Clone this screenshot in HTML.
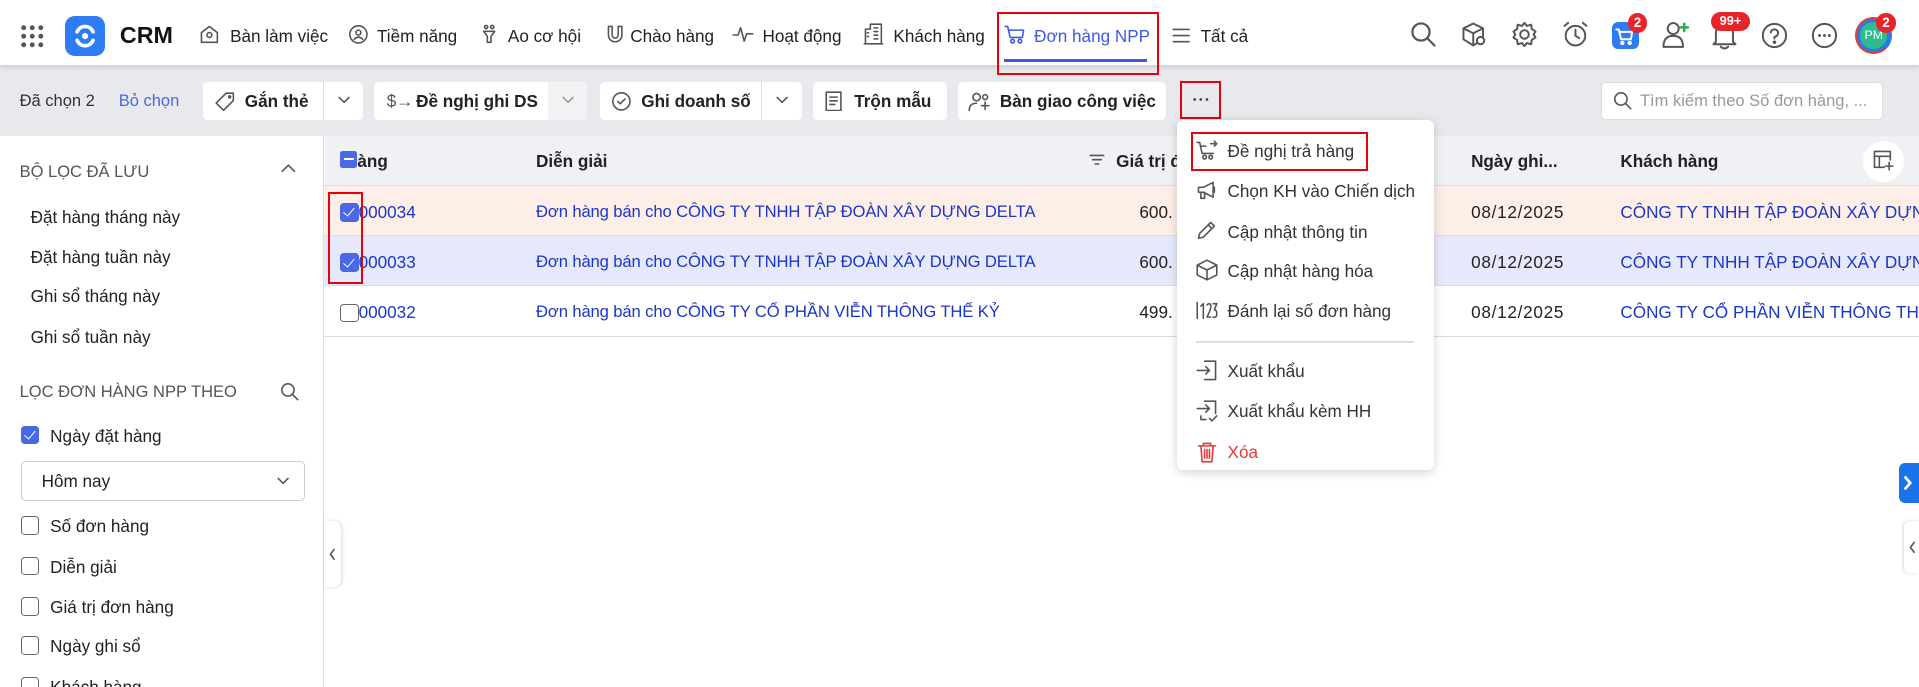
<!DOCTYPE html>
<html><head><meta charset="utf-8"><style>
*{box-sizing:border-box;margin:0;padding:0}
html,body{width:1919px;height:687px;overflow:hidden;background:#fff}
#w{zoom:1.22385;width:1568px;height:561px;position:relative;font-family:"Liberation Sans",sans-serif;color:#222;font-size:14px}
.a{position:absolute;white-space:nowrap}
svg{position:absolute;fill:none;stroke:#555;stroke-width:1.3;stroke-linecap:round;stroke-linejoin:round}
.btn{position:absolute;top:67px;height:31px;background:#fff;border-radius:4px}
.btn span{position:absolute;top:7px;font-size:14px;font-weight:bold;color:#222}
.red{position:absolute;border:2px solid #e8000a}
.cb{position:absolute;width:15px;height:15px;border-radius:3px;border:1.3px solid #666;background:#fff}
.cb.on{background:#4a67e6;border-color:#4a67e6}
.cb.on:after{content:"";position:absolute;left:4px;top:1px;width:4px;height:8px;border:solid #fff;border-width:0 1.5px 1.5px 0;transform:rotate(40deg)}
.blue{color:#1b37c8}
.d{font-size:13.6px;letter-spacing:-0.1px}
.mi{position:absolute;left:1003px;font-size:14px;color:#333}
</style></head><body><div id="w">
<div class="a" style="left:0;top:0;width:1568px;height:53px;background:#fff;box-shadow:0 2px 4px rgba(0,0,0,.12);z-index:2"></div>
<div style="position:absolute;z-index:3;left:0;top:0;width:1568px;height:53px">
<svg style="left:16px;top:20px" width="20" height="20" viewBox="0 0 20 20"><g fill="#555" stroke="none"><circle cx="3" cy="3" r="2"/><circle cx="10" cy="3" r="2"/><circle cx="17" cy="3" r="2"/><circle cx="3" cy="10" r="2"/><circle cx="10" cy="10" r="2"/><circle cx="17" cy="10" r="2"/><circle cx="3" cy="17" r="2"/><circle cx="10" cy="17" r="2"/><circle cx="17" cy="17" r="2"/></g></svg>
<div class="a" style="left:53px;top:13px;width:33px;height:33px;border-radius:8px;background:#2d7cf6"></div>
<svg style="left:58px;top:18px" width="23" height="23" viewBox="0 0 23 23"><path d="M5 8A7 7 0 0 1 18 8M18 15A7 7 0 0 1 5 15" stroke="#fff" stroke-width="3"/><circle cx="11.5" cy="11.5" r="2.5" fill="#fff" stroke="none"/></svg>
<div class="a" style="left:98px;top:18px;font-size:19px;font-weight:bold;color:#111">CRM</div>
<svg style="left:163px;top:20px" width="17" height="17" viewBox="0 0 17 17"><path d="M2 7L8.5 2 15 7V15H2Z"/><circle cx="8.5" cy="9" r="2"/></svg>
<div class="a" style="left:188px;top:21px">Bàn làm việc</div>
<svg style="left:284px;top:20px" width="17" height="17" viewBox="0 0 17 17"><circle cx="8.5" cy="8.5" r="7"/><circle cx="8.5" cy="7" r="2"/><path d="M5 12.5Q8.5 9 12 12.5"/></svg>
<div class="a" style="left:308px;top:21px">Tiềm năng</div>
<svg style="left:392px;top:20px" width="15" height="17" viewBox="0 0 15 17"><path d="M3 6H12L9 10V15H6V10Z"/><circle cx="5" cy="2.5" r="1.3"/><circle cx="10" cy="2.5" r="1.3"/></svg>
<div class="a" style="left:415px;top:21px">Ao cơ hội</div>
<svg style="left:495px;top:20px" width="15" height="17" viewBox="0 0 15 17"><path d="M2 2V9A5.5 5.5 0 0 0 13 9V2H10V9A2.5 2.5 0 0 1 5 9V2Z"/></svg>
<div class="a" style="left:515px;top:21px">Chào hàng</div>
<svg style="left:598px;top:20px" width="18" height="17" viewBox="0 0 18 17"><path d="M1 9H5L7 3 10 14 12 8H17"/></svg>
<div class="a" style="left:623px;top:21px">Hoạt động</div>
<svg style="left:705px;top:19px" width="17" height="18" viewBox="0 0 17 18"><path d="M2 17V5H6V1H15V17ZM1 17H16M9 4h3M9 7h3M9 10h3M9 13h3M3.5 8h1M3.5 11h1"/></svg>
<div class="a" style="left:730px;top:21px">Khách hàng</div>
<svg style="left:820px;top:20px" width="18" height="17" viewBox="0 0 18 17"><path d="M1 2H3L5 11H15L16 5H4" stroke="#3c5be0"/><circle cx="7" cy="14" r="1.5" stroke="#3c5be0"/><circle cx="13" cy="14" r="1.5" stroke="#3c5be0"/></svg>
<div class="a" style="left:845px;top:21px;color:#3c5be0">Đơn hàng NPP</div>
<div class="a" style="left:820px;top:48px;width:117px;height:3px;background:#3c5be0"></div>
<div class="red" style="left:815px;top:10px;width:132px;height:51px"></div>
<svg style="left:958px;top:22px" width="15" height="14" viewBox="0 0 15 14"><path d="M1 2H14M1 7H14M1 12H14"/></svg>
<div class="a" style="left:981px;top:21px">Tất cả</div>
<svg style="left:1152px;top:17px;stroke-width:1.8" width="22" height="22" viewBox="0 0 22 22"><circle cx="9" cy="9" r="7"/><path d="M14 14L20 20"/></svg>
<svg style="left:1194px;top:17px;stroke-width:1.6" width="22" height="22" viewBox="0 0 22 22"><path d="M10 2L2 6V15L10 20 18 15V6ZM2 6L10 10 18 6M10 10V20"/><circle cx="16" cy="16" r="3" fill="#fff"/></svg>
<svg style="left:1235px;top:17px;stroke-width:1.6" width="22" height="22" viewBox="0 0 22 22"><circle cx="11" cy="11" r="3.5"/><path d="M11 1.5L13 4 16.5 3 17 6.5 20 8.5 18.5 11 20 13.5 17 15.5 16.5 19 13 18 11 20.5 9 18 5.5 19 5 15.5 2 13.5 3.5 11 2 8.5 5 6.5 5.5 3 9 4Z"/></svg>
<svg style="left:1276px;top:17px;stroke-width:1.6" width="22" height="22" viewBox="0 0 22 22"><circle cx="11" cy="12" r="8"/><path d="M11 7V12L14 14M2 4L5 1.5M20 4L17 1.5"/></svg>
<div class="a" style="left:1317px;top:18px;width:22px;height:22px;border-radius:5px;background:#2d7cf6"></div>
<svg style="left:1320px;top:22px;stroke:#fff;stroke-width:1.6" width="16" height="15" viewBox="0 0 16 15"><path d="M1 2H3L5 10H13L14 4H4"/><circle cx="6" cy="13" r="1"/><circle cx="12" cy="13" r="1"/></svg>
<div class="a" style="left:1330px;top:11px;width:16px;height:16px;border-radius:8px;background:#e8232a;color:#fff;font-size:11px;font-weight:bold;text-align:center;line-height:16px">2</div>
<svg style="left:1357px;top:16px;stroke-width:1.6" width="24" height="24" viewBox="0 0 24 24"><circle cx="10" cy="7" r="4.5"/><path d="M2 22Q2 13 10 13Q18 13 18 22Z"/><path d="M19 3V9M16 6H22" stroke="#2cae4a" stroke-width="2"/></svg>
<svg style="left:1398px;top:17px;stroke-width:1.6" width="22" height="24" viewBox="0 0 22 24"><path d="M4 17V10A7 7 0 0 1 18 10V17L20 19H2ZM8 21Q11 24 14 21"/></svg>
<div class="a" style="left:1398px;top:10px;width:32px;height:15px;border-radius:8px;background:#e8232a;color:#fff;font-size:10.5px;font-weight:bold;text-align:center;line-height:15px">99+</div>
<svg style="left:1439px;top:18px;stroke-width:1.6" width="22" height="22" viewBox="0 0 22 22"><circle cx="11" cy="11" r="9.5"/><path d="M8 8.5A3 3 0 1 1 11 12V13.5"/><circle cx="11" cy="16.5" r=".6" fill="#555"/></svg>
<svg style="left:1480px;top:18px;stroke-width:1.6" width="22" height="22" viewBox="0 0 22 22"><circle cx="11" cy="11" r="9.5"/><g fill="#555" stroke="none"><circle cx="7" cy="11" r="1.2"/><circle cx="11" cy="11" r="1.2"/><circle cx="15" cy="11" r="1.2"/></g></svg>
<div class="a" style="left:1516px;top:14px;width:30px;height:30px;border-radius:15px;background:#2a7ae6;border:2px solid #e43b3b;border-right-color:#2a7ae6"></div>
<div class="a" style="left:1520px;top:18px;width:22px;height:22px;border-radius:11px;background:#2ebb8e;color:#fff;font-size:10px;text-align:center;line-height:22px">PM</div>
<div class="a" style="left:1533px;top:11px;width:16px;height:16px;border-radius:8px;background:#e8232a;color:#fff;font-size:11px;font-weight:bold;text-align:center;line-height:16px">2</div>
</div>
<div class="a" style="left:0;top:53px;width:1568px;height:58px;background:#e8e9ed"></div>
<div class="a" style="left:16px;top:74px;font-size:13.5px;color:#333">Đã chọn 2</div>
<div class="a" style="left:97px;top:74px;font-size:13.5px;color:#4a67e6">Bỏ chọn</div>
<div class="btn" style="left:166px;width:131px"><span style="left:34px">Gắn thẻ</span></div>
<div class="a" style="left:264px;top:67px;width:1px;height:31px;background:#ddd"></div>
<svg style="left:176px;top:75px" width="16" height="16" viewBox="0 0 16 16"><path d="M9 1H15V7L7 15 1 9Z"/><circle cx="12" cy="4" r=".8"/></svg>
<svg style="left:276px;top:78px" width="10" height="8" viewBox="0 0 10 8"><path d="M1 2L5 6 9 2"/></svg>
<div class="btn" style="left:306px;width:174px"><span style="left:34px">Đề nghị ghi DS</span><div class="a" style="left:142px;top:0;width:32px;height:31px;background:#f2f2f4;border-radius:0 4px 4px 0"></div></div>
<div class="a" style="left:316px;top:74px;font-size:14px;color:#555">$→</div>
<svg style="left:459px;top:78px;stroke:#999" width="10" height="8" viewBox="0 0 10 8"><path d="M1 2L5 6 9 2"/></svg>
<div class="btn" style="left:490px;width:165px"><span style="left:34px">Ghi doanh số</span></div>
<div class="a" style="left:622px;top:67px;width:1px;height:31px;background:#ddd"></div>
<svg style="left:499px;top:74px" width="17" height="17" viewBox="0 0 17 17"><circle cx="8.5" cy="8.5" r="7"/><path d="M5.5 8.5L7.5 10.5 11.5 6.5"/></svg>
<svg style="left:634px;top:78px" width="10" height="8" viewBox="0 0 10 8"><path d="M1 2L5 6 9 2"/></svg>
<div class="btn" style="left:664px;width:110px"><span style="left:34px">Trộn mẫu</span></div>
<svg style="left:674px;top:74px" width="14" height="17" viewBox="0 0 14 17"><path d="M1 1H13V16H1ZM4 5H10M4 8H10M4 11H8"/></svg>
<div class="btn" style="left:783px;width:170px"><span style="left:34px">Bàn giao công việc</span></div>
<svg style="left:791px;top:74px" width="18" height="17" viewBox="0 0 18 17"><circle cx="7" cy="5" r="3"/><path d="M1 16Q1 10 7 10"/><circle cx="14" cy="5" r="2"/><path d="M11 12H17M14 9V15"/></svg>
<div class="a" style="left:964px;top:66px;width:34px;height:31px;border:2px solid #e8000a"></div>
<svg style="left:973px;top:79px" width="16" height="4" viewBox="0 0 16 4"><g fill="#444" stroke="none"><circle cx="3" cy="2" r="1.1"/><circle cx="8" cy="2" r="1.1"/><circle cx="13" cy="2" r="1.1"/></g></svg>
<div class="a" style="left:1308px;top:67px;width:231px;height:31px;background:#fff;border-radius:4px;border:1px solid #ddd"></div>
<svg style="left:1318px;top:74px" width="16" height="16" viewBox="0 0 16 16"><circle cx="6.5" cy="6.5" r="5"/><path d="M10 10L14.5 14.5"/></svg>
<div class="a" style="left:1340px;top:74px;font-size:13.5px;color:#999">Tìm kiếm theo Số đơn hàng, ...</div>
<div class="a" style="left:264px;top:111px;width:1px;height:450px;background:#ddd"></div>
<div class="a" style="left:16px;top:132px;font-size:13.5px;color:#555">BỘ LỌC ĐÃ LƯU</div>
<svg style="left:230px;top:134px" width="12" height="8" viewBox="0 0 12 8"><path d="M1 6L6 1 11 6"/></svg>
<div class="a" style="left:25px;top:169px">Đặt hàng tháng này</div>
<div class="a" style="left:25px;top:202px">Đặt hàng tuần này</div>
<div class="a" style="left:25px;top:234px">Ghi sổ tháng này</div>
<div class="a" style="left:25px;top:267px">Ghi sổ tuần này</div>
<div class="a" style="left:16px;top:312px;font-size:13.5px;color:#555">LỌC ĐƠN HÀNG NPP THEO</div>
<svg style="left:229px;top:312px" width="16" height="16" viewBox="0 0 16 16"><circle cx="6.5" cy="6.5" r="5"/><path d="M10 10L14.5 14.5"/></svg>
<div class="cb on" style="left:17px;top:348px"></div><div class="a" style="left:41px;top:348px">Ngày đặt hàng</div>
<div class="a" style="left:17px;top:377px;width:232px;height:32px;border:1px solid #ccc;border-radius:4px"></div>
<div class="a" style="left:34px;top:385px">Hôm nay</div>
<svg style="left:226px;top:389px" width="10" height="8" viewBox="0 0 10 8"><path d="M1 2L5 6 9 2"/></svg>
<div class="cb" style="left:17px;top:422px"></div><div class="a" style="left:41px;top:422px">Số đơn hàng</div>
<div class="cb" style="left:17px;top:455px"></div><div class="a" style="left:41px;top:455px">Diễn giải</div>
<div class="cb" style="left:17px;top:488px"></div><div class="a" style="left:41px;top:488px">Giá trị đơn hàng</div>
<div class="cb" style="left:17px;top:520px"></div><div class="a" style="left:41px;top:520px">Ngày ghi sổ</div>
<div class="cb" style="left:17px;top:553px"></div><div class="a" style="left:41px;top:553px">Khách hàng</div>
<div class="a" style="left:265px;top:111px;width:1303px;height:41px;background:#f0f1f4;border-bottom:1px solid #ddd"></div>
<div class="a" style="left:265px;top:152px;width:1303px;height:41px;background:#fdeee7;border-bottom:1px solid #ddd"></div>
<div class="a" style="left:265px;top:193px;width:1303px;height:41px;background:#e6e9fb;border-bottom:1px solid #ddd"></div>
<div class="a" style="left:265px;top:234px;width:1303px;height:41px;background:#fff;border-bottom:1px solid #ddd"></div>
<div class="a" style="left:292px;top:123px;font-weight:bold">àng</div>
<div class="a" style="left:278px;top:123px;width:14px;height:14px;border-radius:2px;background:#4a67e6"></div>
<div class="a" style="left:281px;top:129px;width:8px;height:2px;background:#fff"></div>
<div class="a" style="left:438px;top:123px;font-weight:bold">Diễn giải</div>
<svg style="left:890px;top:125px" width="13" height="11" viewBox="0 0 13 11"><path d="M1 2H12M3 5.5H10M5 9H8"/></svg>
<div class="a" style="left:912px;top:123px;font-weight:bold">Giá trị đ</div>
<div class="a" style="left:1202px;top:123px;font-weight:bold">Ngày ghi...</div>
<div class="a" style="left:1324px;top:123px;font-weight:bold">Khách hàng</div>
<div class="a" style="left:1522px;top:115px;width:34px;height:34px;border-radius:17px;background:#fff"></div>
<svg style="left:1530px;top:122px" width="18" height="18" viewBox="0 0 18 18"><path d="M10 15H2V2H15V9M2 6H15M6 6V15M14 11V17M11 14H17"/></svg>
<div class="a blue" style="left:293px;top:165px">000034</div><div class="cb on" style="left:278px;top:166px"></div>
<div class="a blue" style="left:293px;top:206px">000033</div><div class="cb on" style="left:278px;top:207px"></div>
<div class="a blue" style="left:293px;top:247px">000032</div><div class="cb" style="left:278px;top:248px"></div>
<div class="a blue d" style="left:438px;top:165px">Đơn hàng bán cho CÔNG TY TNHH TẬP ĐOÀN XÂY DỰNG DELTA</div>
<div class="a blue d" style="left:438px;top:206px">Đơn hàng bán cho CÔNG TY TNHH TẬP ĐOÀN XÂY DỰNG DELTA</div>
<div class="a blue d" style="left:438px;top:247px">Đơn hàng bán cho CÔNG TY CỔ PHẦN VIỄN THÔNG THẾ KỶ</div>
<div class="a" style="left:931px;top:165px">600.</div><div class="a" style="left:931px;top:206px">600.</div><div class="a" style="left:931px;top:247px">499.</div>
<div class="a" style="left:1202px;top:165px;letter-spacing:.6px">08/12/2025</div><div class="a" style="left:1202px;top:206px;letter-spacing:.6px">08/12/2025</div><div class="a" style="left:1202px;top:247px;letter-spacing:.6px">08/12/2025</div>
<div class="a blue" style="left:1324px;top:165px">CÔNG TY TNHH TẬP ĐOÀN XÂY DỰNG</div>
<div class="a blue" style="left:1324px;top:206px">CÔNG TY TNHH TẬP ĐOÀN XÂY DỰNG</div>
<div class="a blue" style="left:1324px;top:247px">CÔNG TY CỔ PHẦN VIỄN THÔNG THẾ</div>
<div class="red" style="left:268px;top:157px;width:29px;height:75px"></div>
<div class="a" style="left:265px;top:426px;width:14px;height:54px;background:#fff;border-radius:0 6px 6px 0;box-shadow:1px 0 3px rgba(0,0,0,.15)"></div>
<svg style="left:268px;top:447px" width="7" height="12" viewBox="0 0 7 12"><path d="M5 2L2 6 5 10"/></svg>
<div class="a" style="left:1552px;top:378px;width:16px;height:33px;background:#1a73e8;border-radius:5px 0 0 5px"></div>
<svg style="left:1555px;top:388px;stroke:#fff;stroke-width:2.2" width="9" height="13" viewBox="0 0 9 13"><path d="M2 2L6 6.5 2 11"/></svg>
<div class="a" style="left:1556px;top:426px;width:12px;height:42px;background:#fff;border-radius:5px 0 0 5px;box-shadow:-1px 0 3px rgba(0,0,0,.15)"></div>
<svg style="left:1559px;top:441px" width="7" height="12" viewBox="0 0 7 12"><path d="M5 2L2 6 5 10"/></svg>
<div class="a" style="left:962px;top:98px;width:210px;height:286px;background:#fff;border-radius:5px;box-shadow:0 2px 8px rgba(0,0,0,.18)"></div>
<svg style="left:977px;top:114px" width="18" height="17" viewBox="0 0 18 17"><path d="M1 2H3L5 11H14M4 5H8M12 3H17M15 1L17 3 15 5"/><circle cx="7" cy="14" r="1.5"/><circle cx="12" cy="14" r="1.5"/></svg>
<div class="mi" style="top:115px">Đề nghị trả hàng</div>
<div class="red" style="left:973px;top:108px;width:145px;height:32px"></div>
<svg style="left:977px;top:147px" width="18" height="17" viewBox="0 0 18 17"><path d="M2 6H6L14 2V14L6 10H2ZM4 10V15H7V10M15 6V10"/></svg>
<div class="mi" style="top:148px">Chọn KH vào Chiến dịch</div>
<svg style="left:977px;top:180px" width="18" height="17" viewBox="0 0 18 17"><path d="M2 15L3 11 12 2 15 5 6 14ZM10 4L13 7"/></svg>
<div class="mi" style="top:181px">Cập nhật thông tin</div>
<svg style="left:977px;top:212px" width="18" height="18" viewBox="0 0 18 18"><path d="M9 1L17 5V13L9 17 1 13V5ZM1 5L9 9 17 5M9 9V17"/></svg>
<div class="mi" style="top:213px">Cập nhật hàng hóa</div>
<svg style="left:977px;top:245px" width="18" height="17" viewBox="0 0 18 17"><path d="M1 2V15M4 5L6 3V15M9 4Q11 2 12 4Q13 6 9 14H12M14 3H17L15 8Q17 8 17 11Q17 15 14 14"/></svg>
<div class="mi" style="top:246px">Đánh lại số đơn hàng</div>
<div class="a" style="left:977px;top:279px;width:178px;height:1px;background:#ddd"></div>
<svg style="left:977px;top:294px" width="18" height="17" viewBox="0 0 18 17"><path d="M7 1H16V16H7M1 8.5H11M8 5.5L11 8.5 8 11.5"/></svg>
<div class="mi" style="top:295px">Xuất khẩu</div>
<svg style="left:977px;top:327px" width="18" height="18" viewBox="0 0 18 18"><path d="M7 1H16V11M1 7H11M8 4L11 7 8 10M4 13V16H8M11 15L13 17 17 13"/></svg>
<div class="mi" style="top:328px">Xuất khẩu kèm HH</div>
<svg style="left:977px;top:360px;stroke:#e53935" width="18" height="18" viewBox="0 0 18 18"><path d="M2 4H16M6 4V2H12V4M4 4L5 17H13L14 4M7 7V14M9 7V14M11 7V14"/></svg>
<div class="mi" style="top:361px;color:#e53935">Xóa</div>
</div></body></html>
